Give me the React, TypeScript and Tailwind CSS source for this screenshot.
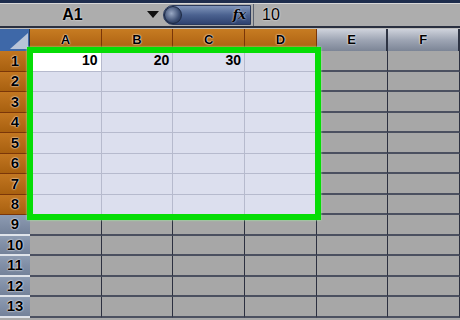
import React from "react";

const cols = ["A", "B", "C", "D", "E", "F"];
const rows = Array.from({ length: 13 }, (_, i) => i + 1);
const values: Record<string, string> = { A1: "10", B1: "20", C1: "30" };

const halo = "[text-shadow:0_0_2px_#fff,0_0_1px_#fff]";

function ColHeader({ label, selected }: { label: string; selected: boolean }) {
  return (
    <div
      className={
        selected
          ? `flex items-center justify-center border-r border-[#7a3608] bg-gradient-to-b from-[#c77c22] to-[#a95d0e] text-[13px] font-bold text-black ${halo}`
          : `flex items-center justify-center border-r-2 border-[#2e3444] bg-gradient-to-b from-[#cfd3dc] via-[#9ea5b4] to-[#7c8596] text-[13px] font-bold text-black ${halo}`
      }
    >
      {label}
    </div>
  );
}

function RowHeader({ n }: { n: number }) {
  const selected = n <= 8;
  return (
    <div
      className={
        selected
          ? `flex items-center justify-center border-b border-[#7a3608] bg-gradient-to-b from-[#c27620] to-[#a8600f] text-[15px] font-bold text-black ${halo}`
          : `flex items-center justify-center border-b-2 border-[#dfe3ea] bg-gradient-to-b from-[#8d9bb2] to-[#74829a] text-[15px] font-bold text-black ${halo}`
      }
    >
      {n}
    </div>
  );
}

function Cell({ col, row }: { col: number; row: number }) {
  const key = cols[col] + row;
  const inSel = col < 4 && row <= 8;
  const active = key === "A1";
  let cls = "flex items-center justify-end pr-[3px] text-[14px] font-bold text-black ";
  if (active) cls += "bg-white border-r border-b border-[#b6bacd]";
  else if (inSel) cls += "bg-[#dcdfee] border-r border-b border-[#b6bacd]";
  else cls += "bg-[#a7a7a7] border-r border-b-2 border-r-[#2c3040] border-b-[#4b5060]";
  return <div className={cls}>{values[key] ?? ""}</div>;
}

export default function App() {
  return (
    <div className="w-[460px] h-[320px] overflow-hidden bg-[#a9a9a9] font-['Liberation_Sans',Arial,sans-serif]">
      {/* title strip */}
      <div className="h-[3px] bg-[#1e2d4d]" />
      {/* formula bar */}
      <div className="flex h-[23px] items-center border-t border-[#d8d8d8] bg-[#adadad]">
        <div className="flex w-[145px] items-center justify-center text-[16px] font-bold text-black [text-shadow:0_0_2px_#fff]">
          A1
        </div>
        <svg width="12" height="8" viewBox="0 0 12 8" className="ml-[2px]">
          <polygon points="0,0 12,0 6,7" fill="#111" />
        </svg>
        <div className="ml-[4px] flex h-[20px] w-[88px] items-center justify-between rounded-l-full border border-[#2b3a5c] bg-gradient-to-b from-[#8196bb] via-[#4b6290] to-[#2f4270] pr-[4px]">
          <div className="h-[18px] w-[18px] rounded-full border border-[#1d2a44] bg-[radial-gradient(circle_at_40%_40%,#9aa9c4,#3b4d72_60%,#1e2a44)]" />
          <span className="font-['DejaVu_Serif',serif] text-[13px] font-bold italic text-black [text-shadow:0_0_2px_#fff]">
            fx
          </span>
        </div>
        <div className="ml-[2px] flex h-[22px] flex-1 items-center border-l border-[#5b6270] pl-[8px] text-[16px] text-black [text-shadow:0_0_2px_#fff]">
          10
        </div>
      </div>
      <div className="h-[2px] bg-[#2a3040]" />
      <div className="h-[1px] bg-[#bdbdbd]" />
      {/* sheet */}
      <div className="relative">
        <div className="grid grid-cols-[30px_repeat(6,1fr)] grid-rows-[22px_repeat(13,20.5px)]">
          <div className="relative overflow-hidden border-r border-[#2e3444] bg-[#3e68a8]">
            <svg width="30" height="22" viewBox="0 0 30 22" className="absolute inset-0">
              <polygon points="28,4 28,20 10,20" fill="#b9c4d8" />
            </svg>
          </div>
          {cols.map((c, i) => (
            <ColHeader key={c} label={c} selected={i < 4} />
          ))}
          {rows.map((r) => (
            <React.Fragment key={r}>
              <RowHeader n={r} />
              {cols.map((c, i) => (
                <Cell key={c + r} col={i} row={r} />
              ))}
            </React.Fragment>
          ))}
        </div>
        {/* selection outline */}
        <div className="pointer-events-none absolute left-[27px] top-[18px] h-[173px] w-[294px] border-[6px] border-[#06dd06] shadow-[0_0_2px_#9f9]" />
      </div>
    </div>
  );
}
